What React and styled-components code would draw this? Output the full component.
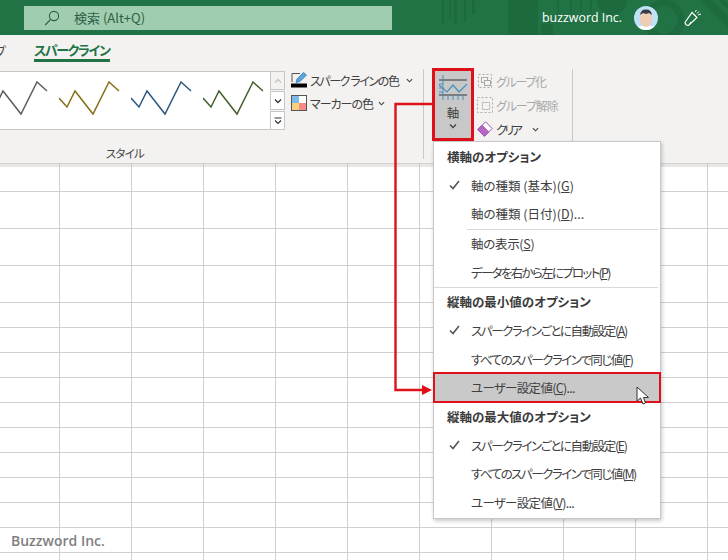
import styled, { createGlobalStyle } from "styled-components";

const GlobalStyle = createGlobalStyle`
  html, body {
    margin: 0;
    padding: 0;
    background: #fff;
  }
  body {
    font-family: "Noto Sans CJK JP", "Noto Sans", sans-serif;
    font-feature-settings: "palt";
    color: #404040;
  }
`;

const RED = "#e0101a";

const Page = styled.div`
  position: relative;
  width: 728px;
  height: 560px;
  overflow: hidden;
  display: flex;
  flex-direction: column;
`;

const TitleBar = styled.header`
  position: relative;
  height: 35px;
  flex: none;
  background: #217346;
  display: flex;
  align-items: center;
  padding: 0 26px 0 24px;
`;

const TitlePattern = styled.svg`
  position: absolute;
  top: 0;
  right: 0;
`;

const SearchBox = styled.div`
  position: relative;
  width: 368px;
  height: 24px;
  background: #a0cdb0;
  display: flex;
  align-items: center;
  gap: 14px;
  padding-left: 20px;
  box-sizing: border-box;
  font-size: 13px;
  color: #2f5f45;
`;

const UserName = styled.span`
  position: relative;
  margin-left: auto;
  font-family: "Open Sans", sans-serif;
  font-size: 12.4px;
  color: #fff;
`;

const Avatar = styled.svg`
  position: relative;
  margin-left: 12px;
  border-radius: 50%;
`;

const Feedback = styled.svg`
  position: relative;
  margin-left: 26px;
`;

const Tabs = styled.nav`
  height: 33px;
  flex: none;
  background: #f3f2f1;
  display: flex;
  gap: 28px;
  font-size: 13px;
`;

const Tab = styled.div`
  position: relative;
  height: 27px;
  display: flex;
  align-items: center;
  padding-top: 4px;
  box-sizing: border-box;
  margin-left: ${(p) => p.$offset || 0}px;
  letter-spacing: ${(p) => p.$tight || 0}px;
  font-weight: ${(p) => (p.$active ? 700 : 400)};
  color: ${(p) => (p.$active ? "#217346" : "#444")};
  border-bottom: ${(p) => (p.$active ? "3px solid #217346" : "none")};
`;

const Ribbon = styled.section`
  height: 95px;
  flex: none;
  background: #f3f2f1;
  display: flex;
  align-items: flex-start;
`;

const StyleGroup = styled.div`
  width: 320px;
  margin-left: -35px;
  flex: none;
  padding-top: 3px;
`;

const GalleryRow = styled.div`
  display: flex;
  height: 59px;
`;

const Gallery = styled.div`
  width: 305px;
  box-sizing: border-box;
  background: #fff;
  border: 1px solid #c6c6c6;
  border-right: none;
  display: flex;
  padding: 9px 0 0 21px;
  overflow: hidden;
`;

const Spark = styled.svg`
  flex: none;
`;

const ScrollCol = styled.div`
  width: 15px;
  display: flex;
  flex-direction: column;
  gap: 1px;
`;

const ScrollBtn = styled.div`
  flex: 1;
  box-sizing: border-box;
  border: 1px solid #c6c6c6;
  background: ${(p) => (p.$off ? "#f3f2f1" : "#fff")};
  display: flex;
  align-items: center;
  justify-content: center;
`;

const GroupLabel = styled.div`
  margin-top: 15px;
  text-align: center;
  font-size: 11.5px;
  line-height: 16px;
  letter-spacing: -0.7px;
  color: #444;
`;

const ColorGroup = styled.div`
  width: 139px;
  height: 90px;
  margin-top: 1px;
  padding: 3px 0 0 6px;
  box-sizing: border-box;
  flex: none;
  border-right: 1px solid #c9c9c9;
  display: flex;
  flex-direction: column;
  gap: 7px;
`;

const Command = styled.div`
  height: 16px;
  display: flex;
  align-items: center;
  font-size: 12px;
  white-space: nowrap;
  color: ${(p) => (p.$off ? "#a8a8a8" : "#404040")};
`;

const CommandText = styled.span`
  margin-left: 3px;
  letter-spacing: ${(p) => p.$tight || 0}px;
`;

const Chevron = styled.svg`
  flex: none;
  margin-left: ${(p) => p.$gap || 0}px;
`;

const AxisGroup = styled.div`
  width: 149px;
  height: 90px;
  margin-top: 1px;
  padding-left: 8px;
  box-sizing: border-box;
  flex: none;
  border-right: 1px solid #c9c9c9;
  display: flex;
`;

const AxisButton = styled.div`
  width: 42px;
  height: 73px;
  margin-top: -1px;
  box-sizing: border-box;
  border: 3px solid ${RED};
  background: #c8c8c8;
  display: flex;
  flex-direction: column;
  align-items: center;
  padding-top: 4px;
  font-size: 12.5px;
`;

const AxisLabel = styled.span`
  margin-top: 2px;
  line-height: 18px;
`;

const GroupCommands = styled.div`
  margin-left: 3px;
  padding-top: 4px;
  display: flex;
  flex-direction: column;
  gap: 8px;
`;

const ColHead = styled.div`
  height: 3px;
  flex: none;
  background: #e8e7e6;
  border-top: 1px solid #d2d0ce;
  border-bottom: 1px solid #c8c8c8;
  margin-bottom: -1px;
  display: grid;
  grid-template-columns: 60px repeat(10, 72px);
`;

const ColTick = styled.div`
  border-right: 1px solid #c8c8c8;
`;

const Sheet = styled.div`
  flex: 1;
  background: #fff;
  display: grid;
  grid-template-columns: 60px repeat(10, 72px);
  grid-template-rows: 25px 37px 37px 37px repeat(11, 25px);
  overflow: hidden;
`;

const Cell = styled.div`
  border-right: 1px solid #cfcfcf;
  border-bottom: 1px solid #cfcfcf;
`;

const Menu = styled.div`
  position: absolute;
  top: 141px;
  left: 433px;
  width: 228px;
  box-sizing: border-box;
  background: #fff;
  border: 1px solid #c8c8c8;
  box-shadow: 1px 2px 4px rgba(0, 0, 0, 0.22);
  padding-bottom: 1px;
  font-size: 12.5px;
`;

const MenuHead = styled.div`
  height: 28.7px;
  padding-left: 13px;
  display: flex;
  align-items: center;
  font-weight: 700;
  color: #3a3a3a;
`;

const MenuItem = styled.div`
  position: relative;
  height: 28.7px;
  display: flex;
  align-items: center;
  white-space: nowrap;
  background: ${(p) => (p.$active ? "#c9c9c9" : "transparent")};
  &::after {
    content: ${(p) => (p.$active ? '""' : "none")};
    position: absolute;
    top: -2px;
    bottom: -1px;
    left: -1px;
    right: -1px;
    border: 2px solid ${RED};
  }
`;

const MenuLabel = styled.span`
  letter-spacing: ${(p) => p.$tight || 0}px;
`;

const CheckSlot = styled.span`
  width: 37px;
  flex: none;
  display: flex;
  justify-content: center;
  padding-left: 3px;
  box-sizing: border-box;
`;

const Sep = styled.div`
  height: 1px;
  margin: 1px 2px -1px ${(p) => p.$indent || 0}px;
  background: #d9d9d9;
`;

const Pointer = styled.svg`
  position: absolute;
  left: 202px;
  top: 12px;
  z-index: 2;
`;

const Connector = styled.svg`
  position: absolute;
  top: 0;
  left: 0;
  pointer-events: none;
`;

const Watermark = styled.div`
  position: absolute;
  left: 11px;
  top: 531px;
  font-family: "Open Sans", sans-serif;
  font-size: 14px;
  font-weight: 600;
  line-height: 20px;
  color: #7f7f7f;
`;

const sparkColors = ["#5f5f5f", "#86701a", "#2f5a80", "#47602f"];

const menuGroups = [
  {
    head: "横軸のオプション",
    endRule: true,
    rows: [
      { text: "軸の種類 (基本)(", key: "G", tail: ")", checked: true },
      { text: "軸の種類 (日付)(", key: "D", tail: ")..." },
      { sep: 33 },
      { text: "軸の表示(", key: "S", tail: ")", tight: -0.3 },
      { text: "データを右から左にプロット(", key: "P", tail: ")", tight: -1.7 },
    ],
  },
  {
    head: "縦軸の最小値のオプション",
    rows: [
      { text: "スパークラインごとに自動設定(", key: "A", tail: ")", checked: true, tight: -1.4 },
      { text: "すべてのスパークラインで同じ値(", key: "F", tail: ")", tight: -1.5 },
      { text: "ユーザー設定値(", key: "C", tail: ")...", active: true, tight: -0.7 },
    ],
  },
  {
    head: "縦軸の最大値のオプション",
    rows: [
      { text: "スパークラインごとに自動設定(", key: "E", tail: ")", checked: true, tight: -1.4 },
      { text: "すべてのスパークラインで同じ値(", key: "M", tail: ")", tight: -1.5 },
      { text: "ユーザー設定値(", key: "V", tail: ")...", tight: -0.7 },
    ],
  },
];

const Down = ({ gap, color = "#444", size = 7 }) => (
  <Chevron $gap={gap} width={size} height={size} viewBox="0 0 8 8">
    <path d="M1 2.5 L4 5.5 L7 2.5" fill="none" stroke={color} strokeWidth="1.3" />
  </Chevron>
);

const Sparkline = ({ color }) => (
  <Spark width="72" height="36" viewBox="0 0 72 36">
    <polyline
      points="0,17 8,26 16,10 34,33 50,1 60,10"
      fill="none"
      stroke={color}
      strokeWidth="1.5"
    />
  </Spark>
);

const SearchIcon = () => (
  <svg width="16" height="16" viewBox="0 0 16 16">
    <circle cx="10" cy="6" r="4.6" fill="none" stroke="#2f5f45" strokeWidth="1.1" />
    <path d="M6.6 9.4 L1.2 15" stroke="#2f5f45" strokeWidth="1.2" />
  </svg>
);

const LineColorIcon = () => (
  <svg width="16" height="16" viewBox="0 0 16 16" style={{ flex: "none" }}>
    <path d="M1 10 V1.5 H9" fill="none" stroke="#555" strokeWidth="1" />
    <path d="M5 10.5 L6 7 L12.5 0.5 L15.5 3 L9 9.5 Z" fill="#5aa6dc" stroke="#2f7ab8" strokeWidth="0.8" />
    <rect x="0" y="11.5" width="16" height="4" fill="#000" />
  </svg>
);

const MarkerColorIcon = () => (
  <svg width="16" height="16" viewBox="0 0 16 16" style={{ flex: "none" }}>
    <rect x="0.5" y="0.5" width="7.5" height="7.5" fill="#7dbbe8" />
    <rect x="8" y="0.5" width="7.5" height="7.5" fill="#fff" />
    <rect x="0.5" y="8" width="7.5" height="7.5" fill="#fbd07c" />
    <rect x="8" y="8" width="7.5" height="7.5" fill="#f78a85" />
    <rect x="0.5" y="0.5" width="15" height="15" fill="none" stroke="#555" />
  </svg>
);

const AxisIcon = () => (
  <svg width="30" height="27" viewBox="0 0 30 27">
    <path d="M1 5 H29 M1 20 H29" stroke="#333" strokeWidth="1" />
    <path d="M5 0 V25 M1 9 H5 M1 13 H5 M1 17 H5 M10 20 V25 M15 20 V25 M20 20 V25 M25 20 V25" stroke="#4b8fbd" strokeWidth="1" />
    <polyline points="1,10 9,17 15,10 21,17 29,9" fill="none" stroke="#4b8fbd" strokeWidth="1.2" />
  </svg>
);

const GroupIcon = () => (
  <svg width="16" height="16" viewBox="0 0 16 16" style={{ flex: "none" }}>
    <rect x="1.5" y="1.5" width="13" height="13" fill="none" stroke="#aaa" strokeDasharray="2 2" />
    <rect x="4.5" y="4.5" width="6" height="5" fill="none" stroke="#aaa" />
    <rect x="7.5" y="7.5" width="6" height="5" fill="#f3f2f1" stroke="#aaa" />
  </svg>
);

const UngroupIcon = () => (
  <svg width="16" height="16" viewBox="0 0 16 16" style={{ flex: "none" }}>
    <rect x="0.5" y="0.5" width="15" height="15" fill="none" stroke="#aaa" strokeDasharray="2 2" />
    <rect x="5.5" y="5.5" width="7" height="7" fill="none" stroke="#aaa" strokeDasharray="2 1" />
  </svg>
);

const EraserIcon = () => (
  <svg width="16" height="16" viewBox="0 0 16 16" style={{ flex: "none" }}>
    <path d="M0.8 8.5 L8.5 0.8 L15.2 7.5 L7.5 15.2 Z" fill="#fff" stroke="#9b4fae" strokeWidth="1" />
    <path d="M0.8 8.5 L5 4.3 L11.7 11 L7.5 15.2 Z" fill="#b766c8" stroke="#9b4fae" strokeWidth="1" />
  </svg>
);

const App = () => {
  const cells = Array.from({ length: 15 * 11 }, (_, i) => i);
  const ticks = Array.from({ length: 11 }, (_, i) => i);

  return (
    <>
      <GlobalStyle />
      <Page>
        <TitleBar>
          <TitlePattern width="300" height="35" viewBox="428 0 300 35">
            <g fill="#1d6a3f">
              <rect x="442" y="0" width="2" height="24" />
              <rect x="449" y="0" width="2" height="18" />
              <rect x="454" y="0" width="3" height="24" />
              <rect x="464" y="0" width="2" height="22" />
              <rect x="472" y="0" width="3" height="14" />
              <rect x="508" y="0" width="30" height="35" />
              <rect x="541" y="24" width="12" height="11" />
              <rect x="557" y="0" width="2" height="14" />
              <rect x="570" y="0" width="2" height="14" />
              <rect x="580" y="0" width="2" height="12" />
              <rect x="590" y="0" width="2" height="12" />
              <path d="M597 0 A15 15 0 0 0 627 0 Z" />
              <path d="M700 0 L728 28 V16 L712 0 Z M718 0 L728 10 V4 L724 0 Z" />
            </g>
            <circle cx="664" cy="20" r="17" fill="none" stroke="#1d6a3f" strokeWidth="7" />
          </TitlePattern>
          <SearchBox>
            <SearchIcon />
            <span>検索 (Alt+Q)</span>
          </SearchBox>
          <UserName>buzzword Inc.</UserName>
          <Avatar width="24" height="24" viewBox="0 0 24 24">
            <rect width="24" height="24" fill="#bfe2f6" />
            <rect x="4" y="20" width="16" height="4" fill="#fff" />
            <ellipse cx="12" cy="13" rx="6" ry="8" fill="#efcdb4" />
            <path d="M6 9 Q7 3 12 3.5 Q17 3 18 9 L15 7 L12 8 L9 7 Z" fill="#3a3a48" />
          </Avatar>
          <Feedback width="18" height="18" viewBox="0 0 18 18">
            <path
              d="M1 13.5 L8 3.5 L13 8.5 L4.5 16.5 Q1.5 16.5 1 13.5 Z M5 16 L7 13"
              fill="none"
              stroke="#fff"
              strokeWidth="1.2"
            />
            <path d="M11 3 L12.5 1 M14 6 L17 5 M13 4.5 L15 2.5" stroke="#fff" strokeWidth="1" />
          </Feedback>
        </TitleBar>

        <Tabs>
          <Tab $offset={-6}>プ</Tab>
          <Tab $active $tight={-1.3}>スパークライン</Tab>
        </Tabs>

        <Ribbon>
          <StyleGroup>
            <GalleryRow>
              <Gallery>
                {sparkColors.map((color) => (
                  <Sparkline key={color} color={color} />
                ))}
              </Gallery>
              <ScrollCol>
                <ScrollBtn $off>
                  <Chevron width="8" height="8" viewBox="0 0 8 8">
                    <path d="M1 5.5 L4 2.5 L7 5.5" fill="none" stroke="#c4c4c4" strokeWidth="1.3" />
                  </Chevron>
                </ScrollBtn>
                <ScrollBtn>
                  <Down size={8} color="#333" />
                </ScrollBtn>
                <ScrollBtn>
                  <Chevron width="8" height="8" viewBox="0 0 8 8">
                    <path d="M0.5 1 H7.5 M1 3.5 L4 6.5 L7 3.5" fill="none" stroke="#333" strokeWidth="1.2" />
                  </Chevron>
                </ScrollBtn>
              </ScrollCol>
            </GalleryRow>
            <GroupLabel>スタイル</GroupLabel>
          </StyleGroup>

          <ColorGroup>
            <Command>
              <LineColorIcon />
              <CommandText $tight={-1.4}>スパーク ラインの色</CommandText>
              <Down gap={7} />
            </Command>
            <Command>
              <MarkerColorIcon />
              <CommandText $tight={-1}>マーカーの色</CommandText>
              <Down gap={5} />
            </Command>
          </ColorGroup>

          <AxisGroup>
            <AxisButton>
              <AxisIcon />
              <AxisLabel>軸</AxisLabel>
              <Down size={8} />
            </AxisButton>
            <GroupCommands>
              <Command $off>
                <GroupIcon />
                <CommandText $tight={-1.3}>グループ化</CommandText>
              </Command>
              <Command $off>
                <UngroupIcon />
                <CommandText $tight={-1.1}>グループ解除</CommandText>
              </Command>
              <Command>
                <EraserIcon />
                <CommandText $tight={-2.5}>クリア</CommandText>
                <Down gap={12} />
              </Command>
            </GroupCommands>
          </AxisGroup>
        </Ribbon>

        <ColHead>
          {ticks.map((t) => (
            <ColTick key={t} />
          ))}
        </ColHead>
        <Sheet>
          {cells.map((c) => (
            <Cell key={c} />
          ))}
        </Sheet>

        <Menu>
          {menuGroups.map((group) => (
            <div key={group.head}>
              <MenuHead>{group.head}</MenuHead>
              {group.rows.map((row, i) =>
                row.sep ? (
                  <Sep key={i} $indent={row.sep} />
                ) : (
                  <MenuItem key={i} $active={row.active}>
                    <CheckSlot>
                      {row.checked && (
                        <svg width="11" height="10" viewBox="0 0 11 10">
                          <path d="M1 5.5 L4 8.5 L10 1" fill="none" stroke="#555" strokeWidth="1.6" />
                        </svg>
                      )}
                    </CheckSlot>
                    <MenuLabel $tight={row.tight}>
                      {row.text}
                      <u>{row.key}</u>
                      {row.tail}
                    </MenuLabel>
                    {row.active && (
                      <Pointer width="14" height="20" viewBox="0 0 14 20">
                        <path
                          d="M1 1 V15 L4.5 12 L7 18 L9.5 17 L7.5 11.5 L12.5 11.5 Z"
                          fill="#fff"
                          stroke="#333"
                          strokeWidth="1"
                        />
                      </Pointer>
                    )}
                  </MenuItem>
                )
              )}
              {group.endRule && <Sep />}
            </div>
          ))}
        </Menu>

        <Connector width="728" height="560" viewBox="0 0 728 560">
          <path d="M432 104 H395.5 V390 H423" fill="none" stroke={RED} strokeWidth="2.4" />
          <path d="M422 385 L432 390 L422 395 Z" fill={RED} />
        </Connector>

        <Watermark>Buzzword Inc.</Watermark>
      </Page>
    </>
  );
};

export default App;
